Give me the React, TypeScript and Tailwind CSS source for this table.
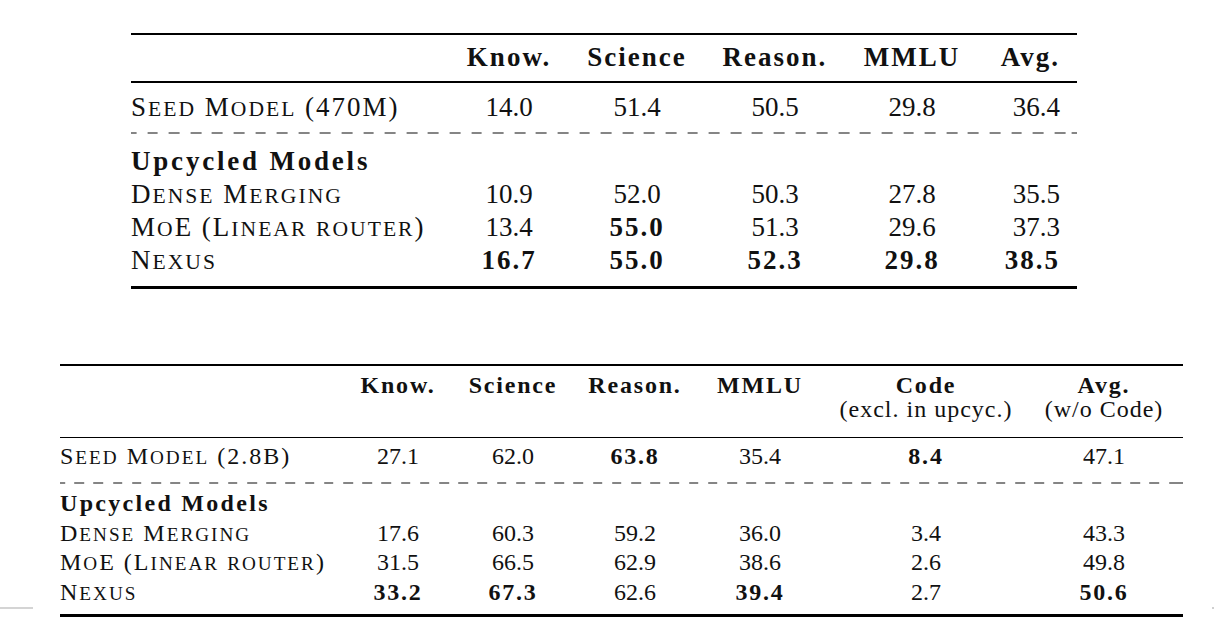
type Cell = { v: string; b?: boolean };

const row = (label: string, vals: (string | [string])[]) => ({
  label,
  cells: vals.map((x): Cell => (Array.isArray(x) ? { v: x[0], b: true } : { v: x })),
});

// small caps like LaTeX \textsc: lowercase runs drawn as smaller capitals
function SmallCaps({ text }: { text: string }) {
  const parts = text.split(/([a-z]+)/);
  return (
    <>
      {parts.map((p, i) =>
        /^[a-z]+$/.test(p) ? (
          <span key={i} className="text-[0.8em] leading-[0] uppercase">
            {p}
          </span>
        ) : (
          <span key={i}>{p}</span>
        ),
      )}
    </>
  );
}

// first table (470M)
const t1Cols = [
  'w-[318px] text-left tracking-[2px]',
  'w-[120px] text-center',
  'w-[136px] text-center',
  'w-[140px] text-center',
  'w-[134px] text-center',
  'w-[98px] text-right pr-[17px]',
];
const t1Head = ['Know.', 'Science', 'Reason.', 'MMLU', 'Avg.'];
const t1Seed = row('Seed Model (470M)', ['14.0', '51.4', '50.5', '29.8', '36.4']);
const t1Rows = [
  row('Dense Merging', ['10.9', '52.0', '50.3', '27.8', '35.5']),
  row('MoE (Linear router)', ['13.4', ['55.0'], '51.3', '29.6', '37.3']),
  row('Nexus', [['16.7'], ['55.0'], ['52.3'], ['29.8'], ['38.5']]),
];

// second table (2.8B)
const t2Cols = [
  'w-[280px] text-left tracking-[2px]',
  'w-[116px] text-center',
  'w-[114px] text-center',
  'w-[130px] text-center',
  'w-[120px] text-center',
  'w-[212px] text-center',
  'w-[151px] text-center pr-[7px]',
];
const t2Head: [string, string?][] = [
  ['Know.'],
  ['Science'],
  ['Reason.'],
  ['MMLU'],
  ['Code', '(excl. in upcyc.)'],
  ['Avg.', '(w/o Code)'],
];
const t2Seed = row('Seed Model (2.8B)', ['27.1', '62.0', ['63.8'], '35.4', ['8.4'], '47.1']);
const t2Rows = [
  row('Dense Merging', ['17.6', '60.3', '59.2', '36.0', '3.4', '43.3']),
  row('MoE (Linear router)', ['31.5', '66.5', '62.9', '38.6', '2.6', '49.8']),
  row('Nexus', [['33.2'], ['67.3'], '62.6', ['39.4'], '2.7', ['50.6']]),
];

function DataRow({ cols, r, bold }: { cols: string[]; r: { label: string; cells: Cell[] }; bold: string }) {
  return (
    <div className="flex">
      <div className={cols[0]}>
        <SmallCaps text={r.label} />
      </div>
      {r.cells.map((c, i) => (
        <div key={i} className={`${cols[i + 1]} ${c.b ? bold : ''}`}>
          {c.v}
        </div>
      ))}
    </div>
  );
}

export default function App() {
  return (
    <div className="relative w-[1214px] h-[636px] overflow-hidden bg-white text-[#111] font-['Liberation_Serif','Times_New_Roman',serif]">
      {/* table 1 */}
      <div className="ml-[131px] mt-[33px] w-[946px] text-[27px] leading-[33px]">
        <div className="h-[2px] bg-black" />
        <div className="flex pt-[6px] pb-[7px] font-bold tracking-[2px]">
          <div className={t1Cols[0]} />
          {t1Head.map((h, i) => (
            <div key={h} className={t1Cols[i + 1]}>
              {h}
            </div>
          ))}
        </div>
        <div className="h-[1.5px] bg-black" />
        <div className="pt-[8px] pb-[8.5px]">
          <DataRow cols={t1Cols} r={t1Seed} bold="font-bold tracking-[2px]" />
        </div>
        <div className="h-[2px] [background-image:repeating-linear-gradient(to_right,#858585_0_10.8px,transparent_10.8px_21.6px)] [background-position:-5.4px_0]" />
        <div className="pt-[11px] pb-[9px]">
          <div className="font-bold tracking-[2.8px]">Upcycled Models</div>
          {t1Rows.map((r) => (
            <DataRow key={r.label} cols={t1Cols} r={r} bold="font-bold tracking-[2px]" />
          ))}
        </div>
        <div className="h-[2.5px] bg-black" />
      </div>

      {/* table 2 */}
      <div className="ml-[60px] mt-[75px] w-[1123px] text-[24px] leading-[29.5px]">
        <div className="h-[2px] bg-black" />
        <div className="flex pt-[7.5px] pb-[15.5px] leading-[24px]">
          <div className={t2Cols[0]} />
          {t2Head.map(([a, b], i) => (
            <div key={a} className={`${t2Cols[i + 1]} h-[48px]`}>
              <div className="font-bold tracking-[1.8px]">{a}</div>
              {b && <div className="tracking-[1px]">{b}</div>}
            </div>
          ))}
        </div>
        <div className="h-[1.5px] bg-black" />
        <div className="pt-[4px] pb-[10.5px]">
          <DataRow cols={t2Cols} r={t2Seed} bold="font-bold tracking-[1.8px]" />
        </div>
        <div className="h-[2px] [background-image:repeating-linear-gradient(to_right,#858585_0_9.6px,transparent_9.6px_19.2px)] [background-position:-4.8px_0]" />
        <div className="pt-[5px] pb-[7px]">
          <div className="font-bold tracking-[2.3px]">Upcycled Models</div>
          {t2Rows.map((r) => (
            <DataRow key={r.label} cols={t2Cols} r={r} bold="font-bold tracking-[1.8px]" />
          ))}
        </div>
        <div className="h-[2.5px] bg-black" />
      </div>

      {/* page edge marks */}
      <div className="absolute left-0 top-[607px] h-[2px] w-[33px] bg-[#d4d4d4]" />
      <div className="absolute right-0 top-[607px] h-[2px] w-[2px] bg-[#cfcfcf]" />
    </div>
  );
}
